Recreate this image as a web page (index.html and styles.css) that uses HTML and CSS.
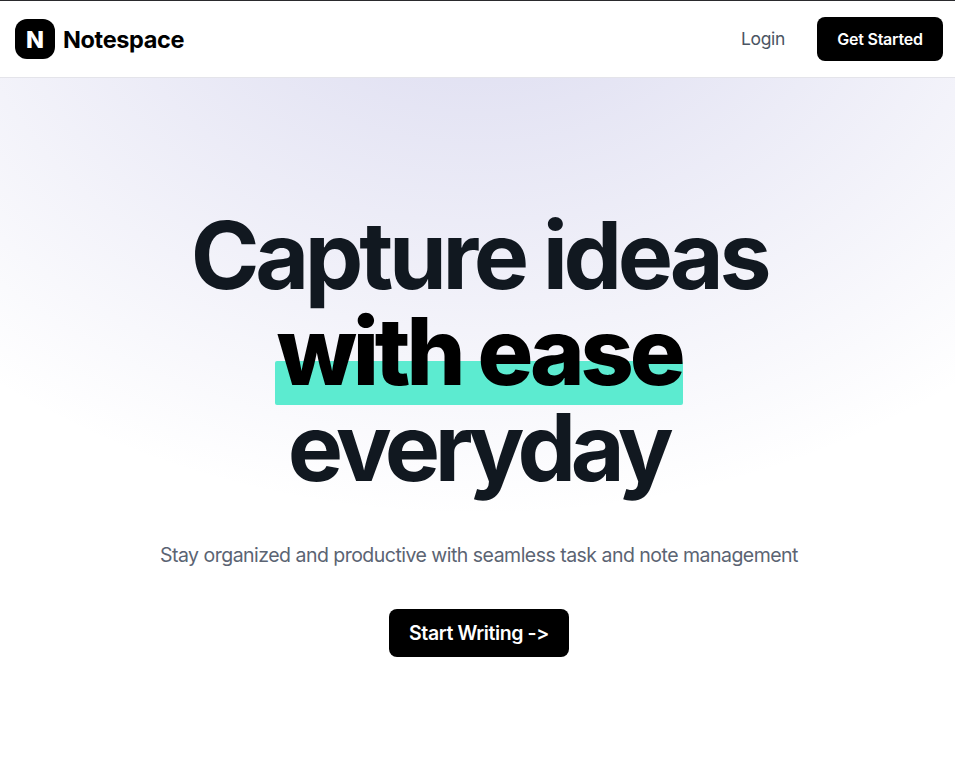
FILE: index.html
```html
<!DOCTYPE html>
<html lang="en">
<head>
<meta charset="utf-8">
<title>Notespace</title>
<link rel="stylesheet" href="styles.css">
</head>
<body>
<header class="nav">
  <a class="brand"><span class="logo">N</span><span class="name">Notespace</span></a>
  <nav class="links"><a class="login">Login</a><a class="btn small">Get Started</a></nav>
</header>
<main class="hero">
  <h1 class="title">
    <span class="line">Capture ideas</span>
    <span class="line"><span class="mark">with ease</span></span>
    <span class="line last">everyday</span>
  </h1>
  <p class="sub">Stay organized and productive with seamless task and note management</p>
  <a class="btn large">Start Writing -&gt;</a>
</main>
</body>
</html>
```

FILE: styles.css
```css
* { box-sizing: border-box; }
body {
  margin: 0;
  height: 773px;
  overflow: hidden;
  display: flex;
  flex-direction: column;
  font-family: Inter, "Liberation Sans", sans-serif;
  color: #111820;
  background: #fff;
}
.nav {
  height: 78px;
  flex: none;
  display: flex;
  align-items: center;
  justify-content: space-between;
  padding: 0 12px 0 15px;
  background: #fff;
  border-top: 1px solid #2a2a2d;
  border-bottom: 1px solid #e4e4ea;
}
.brand { display: flex; align-items: center; gap: 8px; color: #000; }
.logo {
  width: 40px;
  height: 40px;
  border-radius: 12px;
  background: #000;
  color: #fff;
  font-size: 23.5px;
  font-weight: 800;
  line-height: 42px;
  text-align: center;
}
.name { font-size: 23.5px; font-weight: 700; letter-spacing: -0.35px; }
.links { display: flex; align-items: center; gap: 32px; }
.login { font-size: 17.5px; color: #4b5563; letter-spacing: -0.35px; padding-bottom: 2px; }
.btn {
  display: flex;
  align-items: center;
  justify-content: center;
  background: #000;
  color: #fff;
  border-radius: 8px;
  white-space: nowrap;
}
.small { width: 126px; height: 44px; font-size: 16px; font-weight: 600; letter-spacing: -0.25px; }
.hero {
  flex: 1;
  display: flex;
  flex-direction: column;
  align-items: center;
  padding: 129px 0 0 3px;
  background: radial-gradient(ellipse 80% 584px at 50% -146px, rgba(120, 119, 198, 0.28), rgba(255, 255, 255, 0));
}
.title { margin: 0; font-size: 93px; line-height: 96px; font-weight: 720; letter-spacing: -4.3px; text-align: center; }
.line { display: block; white-space: nowrap; }
.last { letter-spacing: -5.4px; padding-right: 2px; }
.mark {
  position: relative;
  z-index: 0;
  display: inline-block;
  width: 408px;
  color: #000;
  font-weight: 800;
  letter-spacing: -4.2px;
}
.mark::before {
  content: "";
  position: absolute;
  z-index: -1;
  left: 0;
  right: 0;
  top: 58px;
  height: 44px;
  border-radius: 2px;
  background: #5cebd0;
}
.sub { margin: 46px 0 0; font-size: 19.5px; line-height: 28px; color: #5b6473; letter-spacing: -0.52px; white-space: nowrap; }
.large { width: 180px; height: 48px; margin-top: 40px; font-size: 19.5px; font-weight: 600; letter-spacing: -0.4px; }
```
